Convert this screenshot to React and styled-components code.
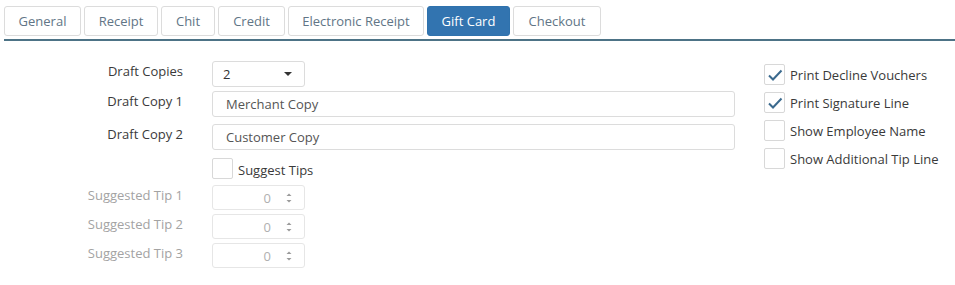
import React from 'react';
import styled, { createGlobalStyle } from 'styled-components';

const GlobalStyle = createGlobalStyle`
  html, body {
    margin: 0;
    padding: 0;
    background: #fff;
  }
  body {
    font-family: 'Open Sans', 'Noto Sans', sans-serif;
    font-size: 13px;
    color: #3a3a3a;
  }
`;

const Page = styled.div`
  width: 955px;
  height: 285px;
  overflow: hidden;
`;

const TabBar = styled.div`
  display: flex;
  gap: 3px;
  margin-left: 4px;
  padding-top: 6px;
  padding-bottom: 3px;
  border-bottom: 2px solid #4d7386;
`;

const Tab = styled.div`
  width: ${(p) => p.$w}px;
  height: 30px;
  box-sizing: border-box;
  display: flex;
  align-items: center;
  justify-content: center;
  border: 1px solid ${(p) => (p.$active ? '#2f72ad' : '#dcdcdc')};
  border-radius: 3px;
  background: ${(p) => (p.$active ? '#3274b0' : '#fff')};
  color: ${(p) => (p.$active ? '#fff' : '#617586')};
  font-size: 13px;
  white-space: nowrap;
`;

const Body = styled.div`
  display: flex;
  padding-top: 20px;
`;

const Form = styled.div`
  display: flex;
  flex-direction: column;
`;

const Row = styled.div`
  display: flex;
  align-items: center;
  margin-top: ${(p) => p.$mt || 0}px;
`;

const Label = styled.div`
  width: 183px;
  text-align: right;
  padding-right: 29px;
  margin-top: -6px;
  color: ${(p) => (p.$disabled ? '#a3a3a3' : '#3a3a3a')};
  white-space: nowrap;
`;

const Field = styled.div`
  height: 26px;
  box-sizing: border-box;
  border: 1px solid #dcdcdc;
  border-radius: 3px;
  display: flex;
  align-items: center;
  background: #fff;
`;

const Select = styled(Field)`
  width: 93px;
  padding: 0 10px;
  justify-content: space-between;
  color: #333;
`;

const Caret = styled.span`
  width: 0;
  height: 0;
  border-left: 4px solid transparent;
  border-right: 4px solid transparent;
  border-top: 4px solid #333;
  margin-right: 2px;
`;

const TextInput = styled(Field)`
  width: 523px;
  padding: 0 13px;
  color: #555;
`;

const NumberInput = styled(Field)`
  width: 93px;
  height: 25px;
  justify-content: flex-end;
  padding-right: 11px;
  color: #b0b0b0;
  border-color: #e6e6e6;
  gap: 14px;
`;

const Spinner = styled.svg`
  display: block;
`;

const Box = styled.span`
  width: 21px;
  height: 21px;
  box-sizing: border-box;
  border: 1px solid #d8d8d8;
  border-radius: 2px;
  display: inline-flex;
  align-items: center;
  justify-content: center;
  flex: none;
  background: #fff;
`;

const CheckRow = styled.label`
  display: flex;
  align-items: center;
  gap: 5px;
  color: #3a3a3a;
  white-space: nowrap;
`;

const CheckText = styled.span`
  margin-top: ${(p) => p.$mt || 0}px;
`;

const Side = styled.div`
  margin-left: 29px;
  display: flex;
  flex-direction: column;
  gap: 7px;
  padding-top: 3px;
`;

const Spacer = styled.div`
  width: 183px;
  padding-right: 29px;
`;

function Check({ checked }) {
  return (
    <Box>
      {checked && (
        <svg width="16" height="14" viewBox="0 0 16 14">
          <path d="M2 7.5 L6 11.5 L14.5 2.5" fill="none" stroke="#3b6a8e" strokeWidth="2" />
        </svg>
      )}
    </Box>
  );
}

function NumberField({ value }) {
  return (
    <NumberInput>
      <span>{value}</span>
      <Spinner width="8" height="14" viewBox="0 0 8 14">
        <path d="M1.5 5 L4 2.5 L6.5 5 Z" fill="#9a9a9a" />
        <path d="M1.5 9 L4 11.5 L6.5 9 Z" fill="#9a9a9a" />
      </Spinner>
    </NumberInput>
  );
}

const tabs = [
  { name: 'General', w: 77 },
  { name: 'Receipt', w: 74 },
  { name: 'Chit', w: 54 },
  { name: 'Credit', w: 67 },
  { name: 'Electronic Receipt', w: 136 },
  { name: 'Gift Card', w: 83, active: true },
  { name: 'Checkout', w: 88 },
];

const options = [
  { label: 'Print Decline Vouchers', checked: true },
  { label: 'Print Signature Line', checked: true },
  { label: 'Show Employee Name' },
  { label: 'Show Additional Tip Line' },
];

export default function App() {
  return (
    <Page>
      <GlobalStyle />
      <TabBar>
        {tabs.map((t) => (
          <Tab key={t.name} $active={t.active} $w={t.w}>
            {t.name}
          </Tab>
        ))}
      </TabBar>
      <Body>
        <Form>
          <Row>
            <Label>Draft Copies</Label>
            <Select>
              <span>2</span>
              <Caret />
            </Select>
          </Row>
          <Row $mt={4}>
            <Label>Draft Copy 1</Label>
            <TextInput>Merchant Copy</TextInput>
          </Row>
          <Row $mt={7}>
            <Label>Draft Copy 2</Label>
            <TextInput>Customer Copy</TextInput>
          </Row>
          <Row $mt={7}>
            <Spacer />
            <CheckRow>
              <Check />
              <CheckText $mt={4}>Suggest Tips</CheckText>
            </CheckRow>
          </Row>
          {[1, 2, 3].map((n) => (
            <Row key={n} $mt={n === 1 ? 6 : 4}>
              <Label $disabled>Suggested Tip {n}</Label>
              <NumberField value={0} />
            </Row>
          ))}
        </Form>
        <Side>
          {options.map((o) => (
            <CheckRow key={o.label}>
              <Check checked={o.checked} />
              <CheckText>{o.label}</CheckText>
            </CheckRow>
          ))}
        </Side>
      </Body>
    </Page>
  );
}
